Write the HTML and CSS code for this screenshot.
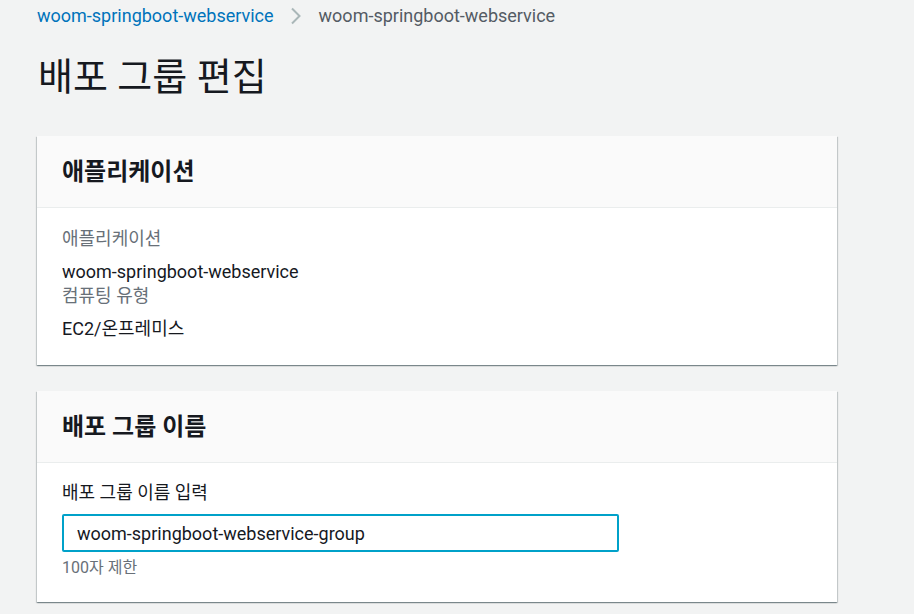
FILE: index.html
```html
<!DOCTYPE html>
<html lang="ko">
<head>
<meta charset="utf-8">
<title>배포 그룹 편집</title>
<link rel="stylesheet" href="styles.css">
</head>
<body>
<div class="page">
  <nav class="breadcrumb">
    <a class="crumb-link" href="#">woom-springboot-webservice</a>
    <svg class="crumb-sep" width="12" height="18" viewBox="0 0 12 18"><path d="M2 1.5 L9.5 9 L2 16.5" fill="none" stroke="#aab7b8" stroke-width="2"/></svg>
    <span class="crumb-current">woom-springboot-webservice</span>
  </nav>
  <h1 class="title">배포 그룹 편집</h1>

  <section class="card">
    <div class="card-header"><h2 class="card-title">애플리케이션</h2></div>
    <div class="card-body">
      <div class="field-label">애플리케이션</div>
      <div class="field-value">woom-springboot-webservice</div>
      <div class="field-label">컴퓨팅 유형</div>
      <div class="field-value">EC2/온프레미스</div>
    </div>
  </section>

  <section class="card">
    <div class="card-header"><h2 class="card-title">배포 그룹 이름</h2></div>
    <div class="card-body form-body">
      <label class="input-label" for="dg">배포 그룹 이름 입력</label>
      <input id="dg" class="text-input" type="text" value="woom-springboot-webservice-group">
      <div class="hint">100자 제한</div>
    </div>
  </section>
</div>
</body>
</html>
```

FILE: styles.css
```css
html, body {
  margin: 0;
  padding: 0;
  background: #f2f3f3;
}
body {
  font-family: Roboto, "Noto Sans CJK KR", sans-serif;
  color: #16191f;
}
.page {
  padding: 0 77px 0 37px;
  display: flex;
  flex-direction: column;
}
.breadcrumb {
  display: flex;
  align-items: center;
  height: 31px;
  font-size: 18px;
}
.crumb-link {
  color: #0073bb;
  text-decoration: none;
}
.crumb-sep {
  margin: 0 17px 0 16px;
}
.crumb-current {
  color: #545b64;
}
.title {
  margin: 22px 0 0 1px;
  font-size: 38px;
  font-weight: 400;
  line-height: 48px;
  height: 83px;
}
.card {
  background: #fff;
  box-shadow: 0 1px 1px 0 rgba(0,28,36,.3), 1px 1px 1px 0 rgba(0,28,36,.15), -1px 1px 1px 0 rgba(0,28,36,.15);
  margin-bottom: 26px;
}
.card-header {
  background: #fafafa;
  border-bottom: 1px solid #eaeded;
  height: 72px;
  box-sizing: border-box;
  display: flex;
  align-items: center;
  padding: 0 25px 4px;
}
.card-title {
  margin: 0;
  font-size: 24px;
  font-weight: 700;
}
.card-body {
  padding: 19px 25px 24px;
}
.field-label {
  color: #687078;
  font-size: 18px;
  line-height: 24px;
  margin-bottom: 9px;
}
.field-value {
  font-size: 18px;
  line-height: 24px;
}
.form-body {
  padding-top: 18px;
  padding-bottom: 23px;
}
.input-label {
  display: block;
  font-size: 18px;
  line-height: 24px;
  margin-bottom: 9px;
}
.text-input {
  display: block;
  box-sizing: border-box;
  width: 557px;
  height: 38px;
  border: 2px solid #00a1c9;
  border-radius: 2px;
  padding: 0 13px;
  font-family: inherit;
  font-size: 18px;
  color: #16191f;
  outline: none;
  background: #fff;
}
.hint {
  margin-top: 5px;
  font-size: 16px;
  color: #687078;
  line-height: 22px;
}
```
